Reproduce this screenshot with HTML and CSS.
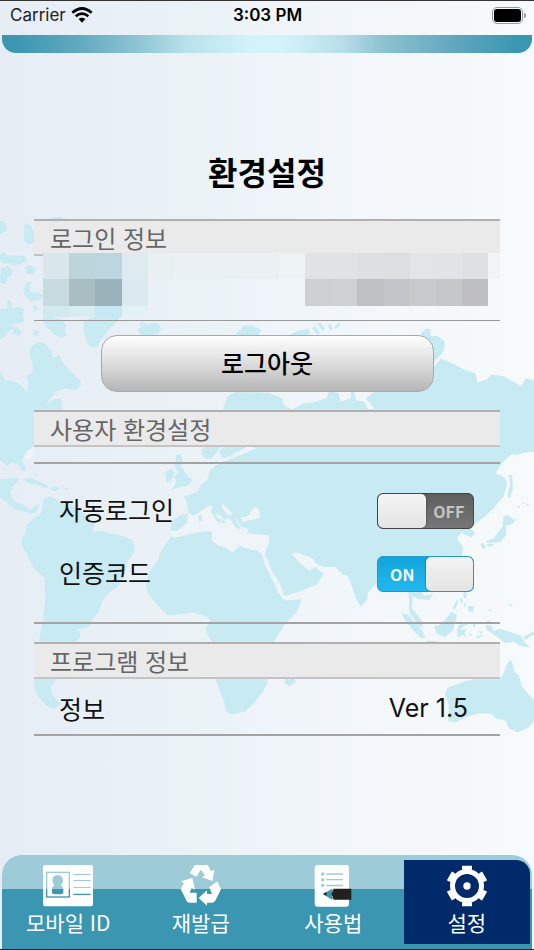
FILE: index.html
```html
<!DOCTYPE html>
<html lang="ko">
<head>
    <meta charset="UTF-8">
    <meta name="viewport" content="width=device-width, initial-scale=1.0">
    <title>환경설정</title>
    <link rel="stylesheet" href="styles.css">
</head>
<body>
    <!-- World map behind the content -->
    <svg class="map" viewBox="0 0 1568 1568" preserveAspectRatio="none" aria-hidden="true">
        <!-- Arctic islands -->
        <path d="M0 62L10 58L22 82L12 92L0 96ZM72 66L90 72L100 92V122L84 128L70 116ZM148 50L175 48L200 56H150ZM0 155L12 150L22 160L40 158L70 160L80 172L62 182L40 186L28 180L10 182L0 172ZM74 192L90 186L104 196L100 212L76 210ZM2 196L20 188L36 198L34 214L22 222L14 240L0 236ZM92 232L78 236L68 256L74 276L92 288L118 286L126 270L108 264L90 262L86 248ZM96 304L108 300L112 312L102 318ZM20 282L34 290L36 310L56 302L70 312L66 330L72 346L54 352L38 352L42 368L24 374L12 390L0 398V310L22 308ZM34 380L46 362L64 374L58 388ZM126 336L150 332L178 340L196 356L190 372L198 386L180 392L160 384L146 370L130 356ZM100 372L116 374L110 388L98 386Z"/>
        <!-- Greenland, Iceland, Svalbard -->
        <path d="M246 344L280 332L282 304H358V330L338 352L322 366L308 386L294 400L288 420L268 420L254 404L246 376ZM404 368L418 364L408 352L420 346L432 356L446 350L464 350L474 370L462 382L434 388L410 382ZM686 386L706 370L714 358L742 358L766 370L756 390ZM850 384L876 372L906 368L912 380L890 390ZM894 372L906 366L910 378ZM916 366L924 358L940 378L932 384ZM930 352L942 350L954 368L948 374ZM962 356L970 352L978 366L970 374ZM984 358L1000 346L996 360L984 368Z"/>
        <!-- North America -->
        <path d="M0 486L14 512L34 516L60 526L78 548L84 526L78 502L98 490L94 462L86 440L90 420L108 406L130 408L150 428L154 450L176 444L186 466L208 488L236 514L238 530L220 542L190 538L164 546L146 566L138 584L158 568L178 566L180 584L186 602L130 660L96 702L72 724L64 744L74 762L76 776L62 770L52 752L32 748L22 758L0 742ZM0 796L48 792L56 802L38 814L30 838L44 862L66 866L88 884L100 874L116 866L128 854L116 866L106 890L92 894L70 888L46 884L20 862L0 848Z"/>
        <!-- Caribbean -->
        <path d="M66 796L90 792L120 804L142 816L136 822L108 812L82 806ZM142 824L160 816L178 824L160 830ZM190 820H200V826H190ZM102 780L110 784L106 788ZM104 764L110 768L106 772ZM200 830L206 836L202 842Z"/>
        <!-- South America -->
        <path d="M128 852L146 844L170 856L200 860L222 878L246 892L266 908L278 930L270 946L300 944L330 952L360 958L388 970L396 990L388 1012L374 1030L366 1066L348 1100L320 1120L302 1140L290 1174L270 1196L262 1216L230 1224L236 1240L222 1262L180 1300L164 1364L148 1392L156 1414L180 1436L160 1450L140 1444L120 1424L104 1402L100 1360L112 1300L116 1250L126 1200L134 1130L130 1076L98 1048L82 1016L62 980L64 962L76 948L78 928L98 908L120 896Z"/>
        <!-- Europe and Asia -->
        <path d="M656 592L668 560L690 548L740 548L790 550L830 566L832 584L856 598L890 580L920 576L960 566L964 546L994 550L1000 575L1030 565V546L1040 546L1046 570L1070 576L1080 596H1100L1074 566L1100 546L1180 530L1262 480L1280 466L1296 452L1330 466L1364 484L1396 494L1402 520L1432 510L1442 498L1478 502L1500 514L1530 530L1545 508L1568 514V718L1540 720L1520 726L1500 726L1478 746L1454 778L1480 790L1490 810L1478 846L1450 878L1420 906L1400 920L1380 934L1396 950L1382 962L1354 948L1342 966L1360 990L1354 1030L1322 1060L1270 1090L1230 1110L1246 1128L1272 1122L1262 1140L1230 1138L1212 1130L1210 1164L1236 1196L1244 1222L1228 1214L1202 1176L1200 1120L1108 1090L1080 1120L1078 1140L1060 1160L1044 1134L1030 1092L1020 1070L1006 1068L984 1046L950 1046L932 1040L916 1020L886 1010L870 1004L856 1008L870 1024L886 1040L908 1056L926 1046L950 1066L930 1096L880 1116L834 1130L826 1104L808 1074L786 1040L778 1008L792 968L760 968L724 958L730 936L760 926L788 930L770 904L740 896L744 878L728 900L706 910L716 940L700 950L676 912L646 882L634 888L662 920L648 930L620 900L594 906L570 920L540 944L514 950L502 944L504 914L532 898L552 894L550 866L540 846L580 832L592 812L612 794L614 774L630 760L650 748L700 730L730 718L752 708L730 702L700 716L680 728L656 736L642 716L660 702Z"/>
        <path d="M590 712L608 702H650L632 724L620 740L600 736ZM518 728L530 724L536 742L532 760L550 786L566 800L552 814L520 820L504 826L518 806L512 788L524 778L512 756ZM484 776L504 766L514 776L506 796L490 806ZM1236 380L1252 366L1266 370L1262 386L1284 388L1306 404L1304 430L1288 448L1272 464V420L1230 400Z"/>
        <!-- Africa -->
        <path d="M500 960L530 960L570 950L614 944L626 950L620 970L640 984L668 992L684 1004L704 984L750 996L770 1010L778 1042L798 1078L816 1112L832 1138L888 1136L870 1176L840 1206L810 1248L790 1300L784 1380L772 1400L746 1434L720 1458L680 1466L664 1460L658 1430L634 1370L640 1290L610 1240L604 1224L618 1198L604 1186L566 1176L526 1182L492 1184L462 1154L436 1124L428 1098L438 1060L462 1030L474 1000ZM838 1350L864 1360L868 1374L850 1388L836 1378Z"/>
        <!-- Japan and the Pacific islands -->
        <path d="M1494 784L1504 784L1506 824L1496 850L1490 840L1498 812ZM1478 904L1490 898L1510 912L1520 906L1504 924L1486 930L1486 954L1470 974L1436 978L1426 972L1450 964L1464 944L1476 930ZM1412 976L1426 984L1424 996L1414 992ZM1430 980H1448V988H1430ZM1516 874L1526 872V878ZM1532 864L1540 862V868ZM1544 866L1552 866V872ZM1362 1112L1370 1118L1370 1136L1360 1134ZM1374 1158L1392 1158L1388 1176L1376 1172ZM1328 1164L1342 1138L1346 1146L1334 1170ZM1350 1132L1360 1142L1354 1152ZM1362 1146L1370 1154L1364 1160ZM1494 1152L1506 1156L1498 1160Z"/>
        <path d="M1178 1178L1198 1182L1222 1208L1240 1228L1250 1250L1234 1248L1212 1226L1192 1200ZM1254 1256L1284 1258L1278 1264L1252 1260ZM1274 1216L1294 1210L1310 1194L1326 1174L1342 1184L1336 1204L1330 1228L1306 1246L1282 1236ZM1348 1210L1378 1208L1360 1216L1350 1226L1370 1222L1364 1232L1370 1246L1358 1240L1344 1248L1342 1226ZM1388 1204L1398 1212L1390 1220ZM1372 1240L1382 1236L1386 1244ZM1402 1228L1416 1230L1414 1238ZM1424 1222L1438 1220L1448 1228ZM1398 1242L1426 1240L1400 1250ZM1426 1212L1440 1212L1450 1228L1466 1222L1494 1230L1530 1242L1542 1262L1558 1276L1530 1272L1510 1260L1480 1262L1450 1238L1430 1226ZM1536 1246L1568 1230V1238L1544 1254ZM1430 1198H1438V1206H1430ZM1436 1166L1444 1168L1438 1174Z"/>
        <!-- Australia -->
        <path d="M1494 1314L1502 1312L1510 1344L1524 1356L1532 1386L1568 1426V1486L1552 1504L1520 1518L1494 1506L1484 1484L1458 1478L1440 1464L1404 1464L1376 1472L1340 1488L1316 1486L1318 1440L1306 1408L1314 1390L1364 1372L1390 1366H1468L1480 1346L1486 1330Z"/>
        <!-- Inland waters -->
        <g class="water">
            <path d="M772 1014L784 1022L798 1058L822 1092L834 1128L890 1132L884 1138L834 1142L816 1116L796 1074ZM100 702L78 716L70 738L84 742L98 724ZM1254 1120L1270 1118L1264 1128ZM1268 464L1286 452L1278 474L1266 480Z"/>
            <path d="M552 892L570 900L600 880L614 870L634 876L650 900L650 920L680 928L676 906L650 876L654 866L680 890L706 922L720 950L790 956V980L776 996L740 998L704 986L682 1004L660 990L626 974L620 940L580 942L534 952L512 964L500 944L520 944L550 920Z"/>
        </g>
        <path d="M624 868L640 866L656 888L672 904L662 912L640 892L632 900L650 914L642 926L634 910L620 890ZM582 900L592 896L594 912L584 918ZM672 900L686 894L696 918L708 940L690 934Z"/>
        <path d="M690 900L716 894L734 884L750 898L788 914L790 940L740 944L706 930Z"/>
        <path class="water" d="M708 906L728 900L750 874L762 886L764 906L748 910L728 914L712 918Z"/>
    </svg>

    <div class="status-bar">
        <div class="carrier">
            Carrier
            <svg width="22" height="16" viewBox="0 0 66 48" aria-hidden="true">
                <path d="M4 17Q33 -8 62 17M14 28Q33 12 52 28" fill="none" stroke="#000" stroke-width="8"/>
                <path d="M23 36Q33 29 43 36L33 47Z"/>
            </svg>
        </div>
        <time>3:03 PM</time>
        <div class="battery"><span></span></div>
    </div>
    <div class="top-strip"></div>

    <main>
        <h1>환경설정</h1>

        <section>
            <h2>로그인 정보</h2>
            <div class="account">
                <svg class="masked" viewBox="0 0 457 64" preserveAspectRatio="none" role="img" aria-label="계정 정보" shape-rendering="crispEdges">
                    <path fill="#d9e6eb" d="M0 0h26v26H0z"/>
                    <path fill="#bcd5db" d="M26 0h26v26H26z"/>
                    <path fill="#bdd5e0" d="M52 0h27v26H52z"/>
                    <path fill="#dfeaf0" d="M79 0h26v26H79z"/>
                    <path fill="#e9f0f1" d="M105 0h26v26h-26z"/>
                    <path fill="#eaf0f3" d="M131 0h105v26H131z"/>
                    <path fill="#eef3f6" d="M236 0h26v26h-26z"/>
                    <path fill="#dfe3e5" d="M262 0h52v26h-52z"/>
                    <path fill="#dce0e2" d="M314 0h27v26h-27z"/>
                    <path fill="#dbdfdf" d="M341 0h26v26h-26z"/>
                    <path fill="#e1e5e5" d="M367 0h26v26h-26z"/>
                    <path fill="#e0e4e7" d="M393 0h26v26h-26z"/>
                    <path fill="#dde1e2" d="M419 0h26v26h-26z"/>
                    <path fill="#f0f4f5" d="M445 0h12v26h-12z"/>
                    <path fill="#c8dbe1" d="M0 26h26v27H0z"/>
                    <path fill="#a8bec3" d="M26 26h26v27H26z"/>
                    <path fill="#9ab3ba" d="M52 26h27v27H52z"/>
                    <path fill="#dbe9f0" d="M79 26h26v27H79z"/>
                    <path fill="#ccd0d3" d="M262 26h26v27h-26z"/>
                    <path fill="#ced2d5" d="M288 26h26v27h-26z"/>
                    <path fill="#bdc1c4" d="M314 26h27v27h-27z"/>
                    <path fill="#c2c6c9" d="M341 26h26v27h-26z"/>
                    <path fill="#c8cbcb" d="M367 26h26v27h-26z"/>
                    <path fill="#c5c8c9" d="M393 26h26v27h-26z"/>
                    <path fill="#bfbfc1" d="M419 26h26v27h-26z"/>
                    <path fill="#d3e9f0" d="M0 53h26v11H0z"/>
                    <path fill="#d8ecf1" d="M26 53h26v11H26z"/>
                    <path fill="#c5e8f2" d="M52 53h27v11H52z"/>
                    <path fill="#e4f1f5" d="M79 53h26v11H79z"/>
                </svg>
            </div>
            <button type="button" class="logout">로그아웃</button>
        </section>

        <section>
            <h2>사용자 환경설정</h2>
            <div class="options">
                <div class="row">
                    <label for="autoLogin">자동로그인</label>
                    <span class="switch">
                        <input type="checkbox" id="autoLogin">
                        <span class="off">OFF</span>
                    </span>
                </div>
                <div class="row">
                    <label for="authCode">인증코드</label>
                    <span class="switch">
                        <input type="checkbox" id="authCode" checked>
                        <span class="on">ON</span>
                    </span>
                </div>
            </div>
        </section>

        <section>
            <h2>프로그램 정보</h2>
            <div class="row version">
                <span>정보</span>
                <span class="number">Ver 1.5</span>
            </div>
        </section>
    </main>

    <nav>
        <a href="#id">
            <svg width="50" height="42" viewBox="0 0 150 126" aria-hidden="true">
                <linearGradient id="split" gradientUnits="userSpaceOnUse" x1="0" y1="0" x2="0" y2="146">
                    <stop offset=".5" stop-color="#9dcbd8"/>
                    <stop offset=".5" stop-color="#3a96b1"/>
                </linearGradient>
                <rect width="150" height="124" rx="6" fill="#fff"/>
                <rect x="11" y="22" width="68" height="74" fill="none" stroke="url(#split)" stroke-width="4"/>
                <path d="M44 31c10 0 16 6 16 15 0 7-4 11-6 15 3 3 7 5 7 11v10c0 4-3 6-7 6H34c-4 0-7-2-7-6V72c0-6 4-8 7-11-2-4-6-8-6-15 0-9 6-15 16-15z" fill="url(#split)"/>
                <path d="M91 27h52v3H91zM91 45h52v3H91zM91 66h52v3H91zM91 86h52v4H91z" fill="url(#split)"/>
            </svg>
            모바일 ID
        </a>
        <a href="#reissue">
            <svg width="42" height="42" viewBox="0 0 126 126" aria-hidden="true">
                <g transform="translate(-538 -75)" fill="#fff">
                    <path d="M583 75H622L630 93L641 89L635 123L604 112L613 106L600 89L587 110L567 99Z"/>
                    <path d="M575 114L541 124L550 130L540 147L558 183Q560 188 566 188H588V158H567L573 143L583 149Z"/>
                    <path d="M594 174L619 151V162H634L626 142L650 124L661 148L643 184Q640 188 634 188H619V197Z"/>
                </g>
            </svg>
            재발급
        </a>
        <a href="#help">
            <svg width="38" height="42" viewBox="0 0 114 126" aria-hidden="true">
                <rect x="2" width="103" height="125" rx="9" fill="#fff"/>
                <g fill="#9dcbd8">
                    <circle cx="26" cy="27" r="5"/>
                    <circle cx="26" cy="44" r="5"/>
                    <circle cx="26" cy="61" r="5"/>
                    <path d="M37 25h50v4H37zM37 42h50v4H37zM37 59h50v5H37z"/>
                </g>
                <path d="M27 87L54 71V104Z" fill="#3a96b1"/>
                <path d="M27 87L37 81V93ZM54 74L58 76V71H112V104H58V99L54 101L56 95L52 87L56 79Z" fill="#231f20"/>
            </svg>
            사용법
        </a>
        <a href="#settings" class="active">
            <svg width="42" height="42" viewBox="-63 -63 126 126" aria-hidden="true">
                <g fill="#fff">
                    <circle r="51"/>
                    <path id="teeth" d="M-15 -61H15V-52L11 -44V44L15 52V61H-15V52L-11 44V-44L-15 -52Z"/>
                    <use href="#teeth" transform="rotate(60)"/>
                    <use href="#teeth" transform="rotate(120)"/>
                </g>
                <circle r="36" fill="#002a6a"/>
                <circle r="11" fill="#fff"/>
            </svg>
            설정
        </a>
    </nav>
</body>
</html>
```
FILE: styles.css
```css
* {
    box-sizing: border-box;
}
body {
    position: relative;
    display: flex;
    flex-direction: column;
    min-height: 100vh;
    margin: 0;
    border-top: 1px solid #333;
    border-bottom: 1px solid #222;
    background: linear-gradient(to right, #e6edf5, #eaf2f6 35%, #f0f5fa 55%, #f7fafb);
    font-family: "Noto Sans CJK KR", sans-serif;
    color: #111;
}

.map {
    position: absolute;
    top: 199px;
    left: 0;
    width: 100%;
    height: 550px;
    z-index: -1;
    fill: #c8eaf3;
}
.map .water {
    fill: #eef4f8;
}

.status-bar {
    display: grid;
    grid-template-columns: 1fr auto 1fr;
    align-items: center;
    height: 28px;
    margin-bottom: 6px;
    padding: 0 9px 0 10px;
    font-family: Inter, sans-serif;
    font-size: 17px;
    color: #000;
}
.carrier {
    display: flex;
    align-items: center;
    gap: 5px;
    color: #222;
}
.status-bar time {
    font-weight: 600;
}
.battery {
    position: relative;
    justify-self: end;
    width: 31px;
    height: 17px;
    margin-right: 2px;
    padding: 1px;
    border: 1px solid #999;
    border-radius: 5px;
}
.battery span {
    display: block;
    height: 100%;
    border-radius: 3px;
    background: #000;
}
.battery::after {
    content: "";
    position: absolute;
    top: 5px;
    right: -4px;
    width: 2px;
    height: 5px;
    border-radius: 0 2px 2px 0;
    background: #999;
}

.top-strip {
    height: 18px;
    margin: 0 2px;
    border-radius: 0 0 14px 14px;
    background: linear-gradient(to right, #3a96b1 2%, #5fa9bf 14%, #8cc3d2 25%, #b9e2ec 35%, #d3f3fa 47%, #d3f3fa 53%, #b9dfea 64%, #8cc2d1 72%, #62a8bf 85%, #3a96b1 97%);
}

main {
    margin: 0 34px;
}
h1 {
    margin: 94px 0 24px;
    font-size: 32px;
    line-height: 48px;
    text-align: center;
    color: #000;
}
h2 {
    height: 37px;
    margin: 0;
    padding-left: 16px;
    border-top: 2px solid #b0b0b0;
    border-bottom: 2px solid #c4c4c4;
    background: #eaeaea;
    font-size: 24px;
    font-weight: 400;
    line-height: 34px;
    color: #666;
}

.account {
    position: relative;
    height: 65px;
    border-bottom: 1px solid #999;
}
.masked {
    position: absolute;
    top: -3px;
    left: 9px;
    width: calc(100% - 9px);
    height: 64px;
}
.logout {
    display: block;
    width: calc(100% - 133px);
    height: 57px;
    margin: 14px auto 18px;
    padding: 0 0 4px;
    border: 1px solid #aaa;
    border-radius: 16px;
    background: linear-gradient(#fff, #e0e0e0 45%, #b6b6b6);
    font-family: inherit;
    font-size: 25px;
    font-weight: 500;
    color: #000;
}

.options {
    margin: 15px 0 18px;
    padding: 15px 0 17px;
    border-top: 2px solid #a3a3a3;
    border-bottom: 2px solid #a3a3a3;
}
.row {
    display: flex;
    align-items: center;
    justify-content: space-between;
    height: 63px;
    padding: 0 26px 0 25px;
    font-size: 25px;
}
.row label {
    padding-bottom: 3px;
}
.version {
    height: 57px;
    padding-right: 32px;
    padding-top: 3px;
    border-bottom: 2px solid #a3a3a3;
}
.number {
    font-family: Inter, sans-serif;
    line-height: 32px;
}

.switch {
    position: relative;
    width: 97px;
    height: 36px;
}
.switch input {
    appearance: none;
    display: flex;
    width: 100%;
    height: 100%;
    margin: 0;
    border: 1px solid #444;
    border-radius: 6px;
    background: linear-gradient(#5e5e5e, #777);
    overflow: hidden;
}
.switch input::before {
    content: "";
    width: 50%;
    border-radius: 5px;
    background: linear-gradient(#f4f4f4, #e4e4e4);
    box-shadow: 0 0 2px #333;
}
.switch input:checked {
    justify-content: flex-end;
    border-color: #2599c3;
    background: linear-gradient(#12a5dc, #22b8ee);
}
.switch input:checked::before {
    box-shadow: 0 0 2px #157;
}
.switch span {
    position: absolute;
    top: 0;
    width: 50%;
    font-family: "Noto Sans CJK KR", sans-serif;
    font-size: 16px;
    font-weight: 700;
    line-height: 36px;
    text-align: center;
    pointer-events: none;
}
.switch .off {
    right: 1px;
    color: #c4c4c4;
}
.switch .on {
    left: 1px;
    color: #fff;
}

nav {
    display: grid;
    grid-template-columns: repeat(4, 1fr);
    height: 94px;
    margin: auto 2px 0;
    border-radius: 20px 20px 0 0;
    background: linear-gradient(#9dcbd8 34px, #3a96b1 34px);
}
nav a {
    display: flex;
    flex-direction: column;
    align-items: center;
    padding-top: 10px;
    font-size: 21px;
    line-height: 30px;
    color: #fff;
    text-decoration: none;
}
nav a.active {
    margin: 5px 2px 5px 4px;
    padding-top: 5px;
    border-top-right-radius: 14px;
    background: #002a6a;
}
```
